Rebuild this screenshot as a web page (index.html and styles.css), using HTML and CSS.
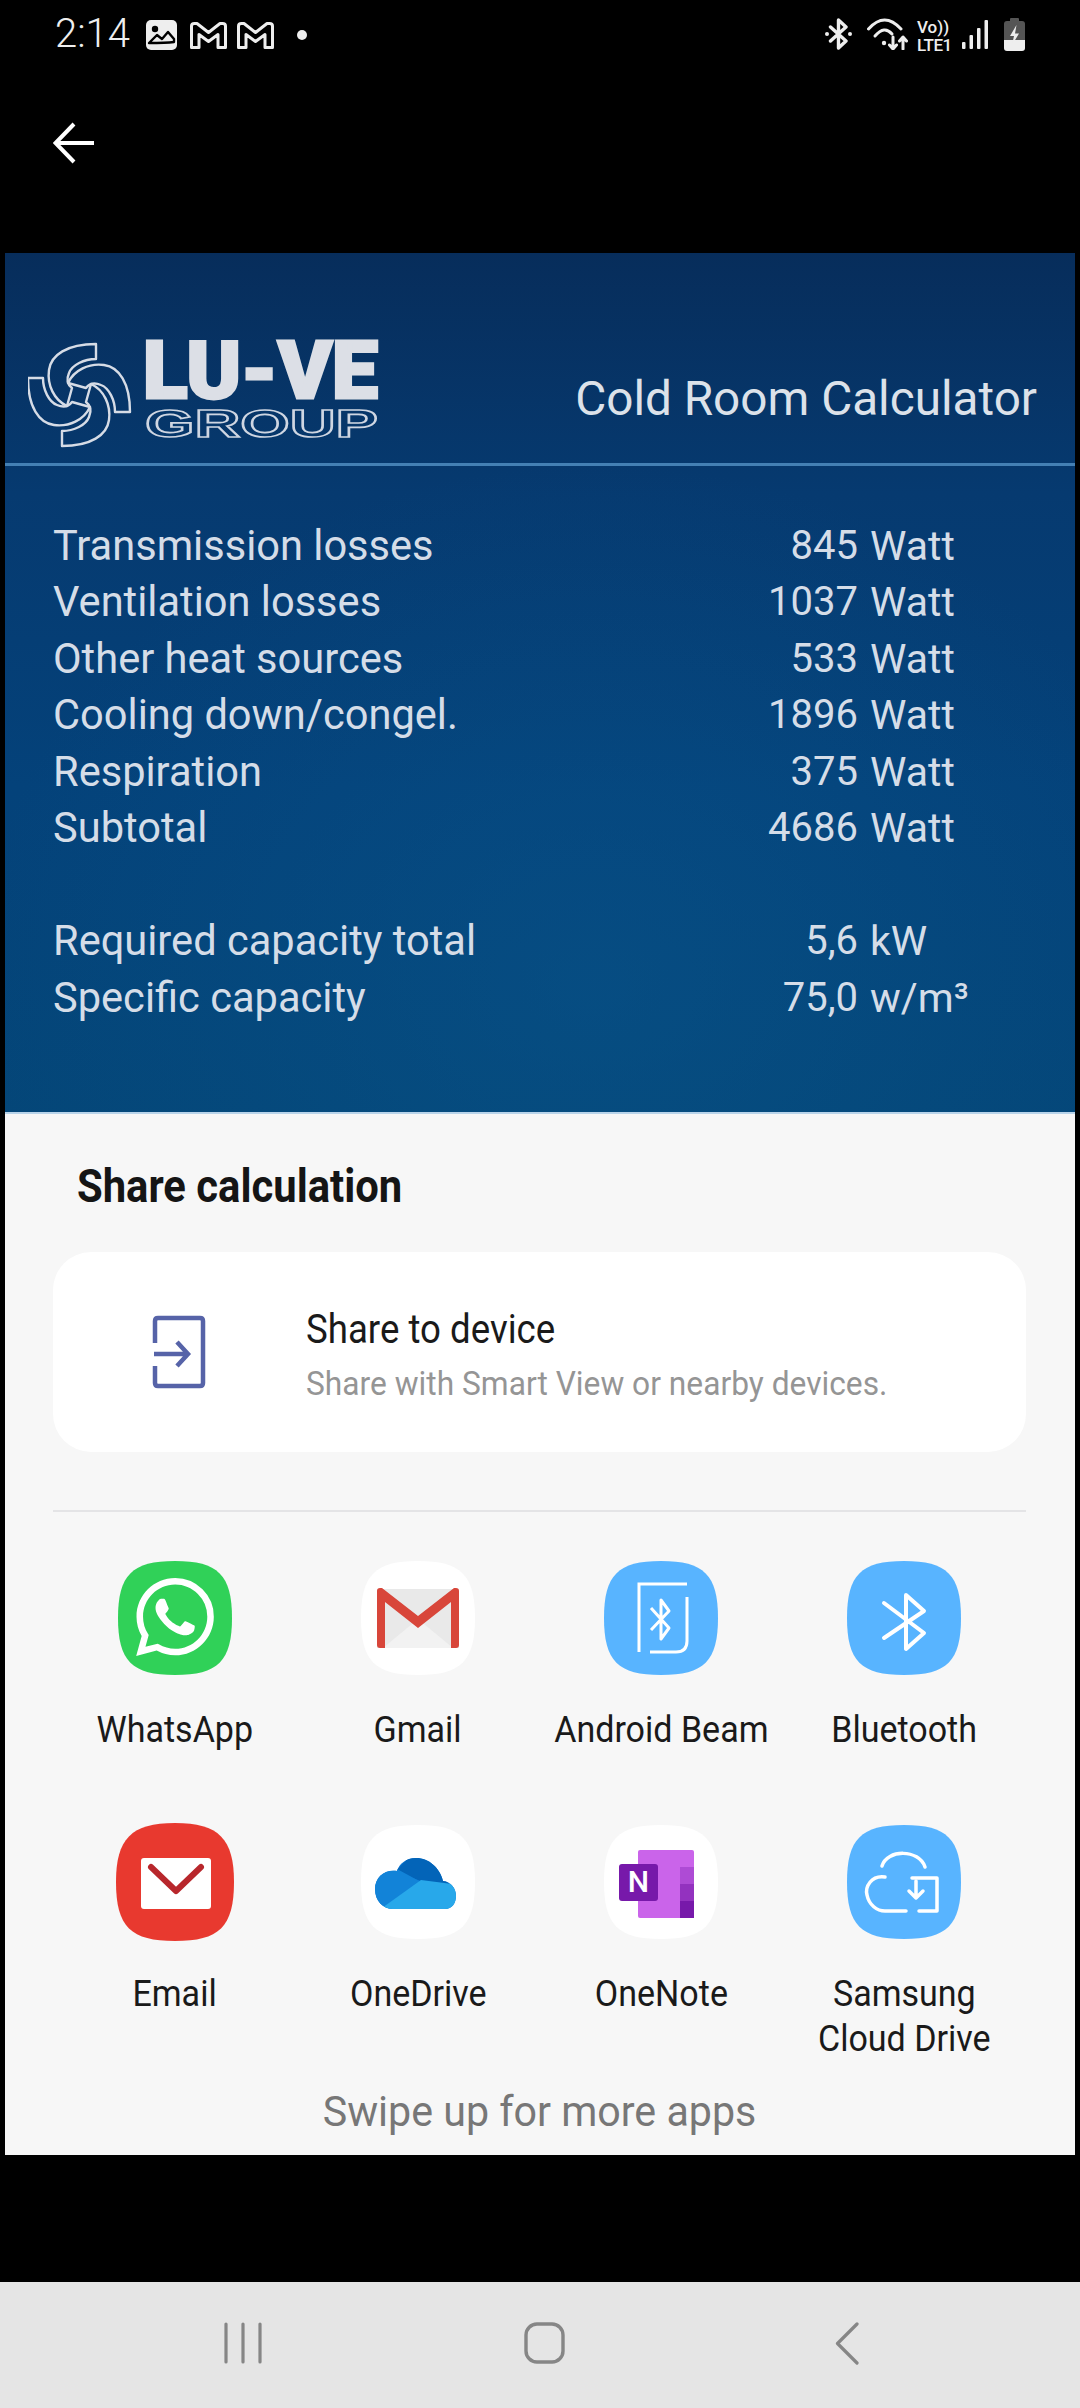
FILE: index.html
```html
<!DOCTYPE html>
<html lang="en">
<head>
<meta charset="utf-8">
<title>Cold Room Calculator</title>
<link rel="stylesheet" href="styles.css">
</head>
<body>
<div class="screen">
  <header class="statusbar">
    <div class="status-left">
      <span class="time">2:14</span>
      <svg class="ic-pic" width="31" height="30" viewBox="0 0 31 30"><rect width="31" height="30" rx="5" fill="#eee"/><circle cx="9" cy="9" r="3.2" fill="#000"/><path d="M3 23 L11 15 L16 19 L22 12 L28 19 V22 Q20 23 3 23Z" fill="none" stroke="#000" stroke-width="2.4" stroke-linejoin="round"/></svg>
      <svg class="ic-m1" width="37" height="27" viewBox="0 0 37 27"><path d="M1.5 4 Q1.5 1.5 4.5 1.5 H7 L18.5 10.5 L30 1.5 H32.5 Q35.5 1.5 35.5 4 V25.5 H28 V12.5 L18.5 19.5 L9 12.5 V25.5 H1.5Z" fill="none" stroke="#eee" stroke-width="3" stroke-linejoin="round"/></svg>
      <svg class="ic-m2" width="37" height="27" viewBox="0 0 37 27"><path d="M1.5 4 Q1.5 1.5 4.5 1.5 H7 L18.5 10.5 L30 1.5 H32.5 Q35.5 1.5 35.5 4 V25.5 H28 V12.5 L18.5 19.5 L9 12.5 V25.5 H1.5Z" fill="none" stroke="#eee" stroke-width="3" stroke-linejoin="round"/></svg>
      <span class="dot"></span>
    </div>
    <div class="status-right">
      <svg width="27" height="32" viewBox="0 0 27 32"><path d="M5.5 9 L21 23 L13.5 30 V2 L21 9 L5.5 23" fill="none" stroke="#eee" stroke-width="3.4" stroke-linejoin="round" stroke-linecap="round"/><circle cx="2" cy="16" r="2" fill="#eee"/><circle cx="25" cy="16" r="2" fill="#eee"/></svg>
      <svg class="ic-wifi" width="41" height="32" viewBox="0 0 41 32"><g fill="none" stroke="#eee" stroke-width="3" stroke-linecap="round" stroke-linejoin="round"><path d="M1.5 11 Q17.5 -7 34 11"/><path d="M8 18 Q17.5 7 25 16"/><path d="M26 19 V31 M22.500 27 L26 31 L29.500 27"/><path d="M36 31 V19.500 M32.500 23 L36 19 L39.500 23"/></g><circle cx="17" cy="25" r="2.200" fill="#eee"/></svg>
      <div class="volte"><span class="vo">Vo))</span><span class="lte">LTE1</span></div>
      <svg class="ic-signal" width="26" height="29" viewBox="0 0 26 29"><g fill="#eee"><rect x="0" y="22" width="3.500" height="7" rx="1"/><rect x="7.500" y="15" width="3.500" height="14" rx="1"/><rect x="15" y="8" width="3.500" height="21" rx="1"/><rect x="22.500" y="0" width="3.500" height="29" rx="1"/></g></svg>
      <svg class="ic-batt" width="21" height="33" viewBox="0 0 21 33"><path d="M6 3 V1 Q6 0 7 0 H14 Q15 0 15 1 V3Z" fill="#555"/><path d="M0 22 V6 Q0 3 3 3 H18 Q21 3 21 6 V22Z" fill="#555"/><path d="M0 22 H21 V30 Q21 33 18 33 H3 Q0 33 0 30Z" fill="#eee"/><path d="M12.500 7 L6 18 H10 L8 27 L15 15.500 H11Z" fill="#eee"/></svg>
    </div>
  </header>

  <div class="appbar">
    <svg width="42" height="42" viewBox="0 0 42 42"><path d="M41 21 H3 M21 2 L2.500 21 L21 40" fill="none" stroke="#fff" stroke-width="4"/></svg>
  </div>

  <main class="panel">
    <section class="report">
      <div class="report-head">
        <svg class="logo" width="352" height="128" viewBox="0 -20 352 128">
          <g transform="translate(51 53)" fill="none" stroke="#d6dce6" stroke-width="2.400" stroke-linejoin="round">
            <path d="M-11 -12 C-5 -25 10 -32 25 -30 C40 -28 51 -12 51 17 H36 C36 5 30 -7 22 -10 C15 -13 10 -11 7 -7Z"/>
            <path transform="rotate(90)" d="M-11 -12 C-5 -25 10 -32 25 -30 C40 -28 51 -12 51 17 H36 C36 5 30 -7 22 -10 C15 -13 10 -11 7 -7Z"/>
            <path transform="rotate(180)" d="M-11 -12 C-5 -25 10 -32 25 -30 C40 -28 51 -12 51 17 H36 C36 5 30 -7 22 -10 C15 -13 10 -11 7 -7Z"/>
            <path transform="rotate(270)" d="M-11 -12 C-5 -25 10 -32 25 -30 C40 -28 51 -12 51 17 H36 C36 5 30 -7 22 -10 C15 -13 10 -11 7 -7Z"/>
          </g>
          <text class="logo-main" x="115" y="56" textLength="235" lengthAdjust="spacingAndGlyphs">LU-VE</text>
          <text class="logo-sub" x="117" y="95" textLength="233" lengthAdjust="spacingAndGlyphs">GROUP</text>
        </svg>
        <h1 class="report-title">Cold Room Calculator</h1>
      </div>
      <div class="stats">
        <span>Transmission losses</span><span class="num">845</span><span class="unit">Watt</span>
        <span>Ventilation losses</span><span class="num">1037</span><span class="unit">Watt</span>
        <span>Other heat sources</span><span class="num">533</span><span class="unit">Watt</span>
        <span>Cooling down/congel.</span><span class="num">1896</span><span class="unit">Watt</span>
        <span>Respiration</span><span class="num">375</span><span class="unit">Watt</span>
        <span>Subtotal</span><span class="num">4686</span><span class="unit">Watt</span>
        <span class="spacer"></span>
        <span>Required capacity total</span><span class="num">5,6</span><span class="unit">kW</span>
        <span>Specific capacity</span><span class="num">75,0</span><span class="unit">w/m³</span>
      </div>
    </section>

    <section class="sheet">
      <h2 class="sheet-title">Share calculation</h2>
      <div class="device-card">
        <svg class="device-icon" width="56" height="74" viewBox="0 0 56 74"><path d="M4 28 V6 Q4 3 7 3 H49 Q52 3 52 6 V68 Q52 71 49 71 H7 Q4 71 4 68 V51" fill="none" stroke="#5663a8" stroke-width="4.500"/><path d="M3 39 H36 M26 27 L37 39 L26 51" fill="none" stroke="#5663a8" stroke-width="4.500"/></svg>
        <div class="device-text">
          <div class="device-name">Share to device</div>
          <div class="device-sub">Share with Smart View or nearby devices.</div>
        </div>
      </div>
      <div class="divider"></div>
      <div class="apps">
        <div class="app">
          <svg class="app-icon" viewBox="0 0 114 114"><path fill="#30d158" d="M57 0 C100 0 114 14 114 57 C114 100 100 114 57 114 C14 114 0 100 0 57 C0 14 14 0 57 0Z"/><g transform="translate(18 17) scale(3.250)"><path fill="#fff" d="M17.472 14.382c-.297-.149-1.758-.867-2.03-.967-.273-.099-.471-.148-.67.15-.197.297-.767.966-.94 1.164-.173.199-.347.223-.644.075-.297-.15-1.255-.463-2.39-1.475-.883-.788-1.48-1.761-1.653-2.059-.173-.297-.018-.458.13-.606.134-.133.298-.347.446-.52.149-.174.198-.298.298-.497.099-.198.05-.371-.025-.52-.075-.149-.669-1.612-.916-2.207-.242-.579-.487-.5-.669-.51-.173-.008-.371-.01-.57-.01-.198 0-.52.074-.792.372-.272.297-1.04 1.016-1.04 2.479 0 1.462 1.065 2.875 1.213 3.074.149.198 2.096 3.2 5.077 4.487.709.306 1.262.489 1.694.625.712.227 1.36.195 1.871.118.571-.085 1.758-.719 2.006-1.413.248-.694.248-1.289.173-1.413-.074-.124-.272-.198-.57-.347m-5.421 7.403h-.004a9.87 9.87 0 01-5.031-1.378l-.361-.214-3.741.982.998-3.648-.235-.374a9.86 9.86 0 01-1.51-5.26c.001-5.45 4.436-9.884 9.888-9.884 2.64 0 5.122 1.03 6.988 2.898a9.825 9.825 0 012.893 6.994c-.003 5.45-4.437 9.884-9.885 9.884m8.413-18.297A11.815 11.815 0 0012.05 0C5.495 0 .16 5.335.157 11.892c0 2.096.547 4.142 1.588 5.945L.057 24l6.305-1.654a11.882 11.882 0 005.683 1.448h.005c6.554 0 11.89-5.335 11.893-11.893a11.821 11.821 0 00-3.48-8.413z"/></g></svg>
          <span class="app-label">WhatsApp</span>
        </div>
        <div class="app">
          <svg class="app-icon" viewBox="0 0 114 114"><path fill="#fff" d="M57 0 C100 0 114 14 114 57 C114 100 100 114 57 114 C14 114 0 100 0 57 C0 14 14 0 57 0Z"/><rect x="16" y="28" width="82" height="59" fill="#e9e9e9"/><path d="M22 87 L57 58 L92 87Z" fill="#f2f2f2"/><path d="M16 30 Q16 27 19 27 L21 27 L57 55 L93 27 L95 27 Q98 27 98 30 V84 Q98 87 95 87 H90 V41 L57 67 L24 41 V87 H19 Q16 87 16 84Z" fill="#d8463a"/></svg>
          <span class="app-label">Gmail</span>
        </div>
        <div class="app">
          <svg class="app-icon" viewBox="0 0 114 114"><path fill="#58b4ff" d="M57 0 C100 0 114 14 114 57 C114 100 100 114 57 114 C14 114 0 100 0 57 C0 14 14 0 57 0Z"/><path d="M83 23 H35 V91 M83 36 V80 Q83 91 72 91 H46" fill="none" stroke="#fff" stroke-width="3"/><path d="M47 47 L65 67 L57 78 V39 L65 50 L47 69" fill="none" stroke="#fff" stroke-width="3" stroke-linejoin="round"/></svg>
          <span class="app-label">Android Beam</span>
        </div>
        <div class="app">
          <svg class="app-icon" viewBox="0 0 114 114"><path fill="#58b4ff" d="M57 0 C100 0 114 14 114 57 C114 100 100 114 57 114 C14 114 0 100 0 57 C0 14 14 0 57 0Z"/><path d="M37 42 L77 72 L59 88 V34 L77 50 L37 77" fill="none" stroke="#fff" stroke-width="4" stroke-linejoin="round" stroke-linecap="round"/></svg>
          <span class="app-label">Bluetooth</span>
        </div>
        <div class="app">
          <svg class="app-icon" viewBox="0 0 114 114"><path fill="#e8392f" d="M57 -2 C101 -2 116 14 116 57 C116 102 101 116 57 116 C13 116 -2 102 -2 57 C-2 14 13 -2 57 -2Z"/><rect x="23" y="33" width="70" height="51" rx="3" fill="#fff"/><path d="M33 42 L58 66 L83 42" fill="none" stroke="#b8272c" stroke-width="6" stroke-linecap="round" stroke-linejoin="round"/></svg>
          <span class="app-label">Email</span>
        </div>
        <div class="app">
          <svg class="app-icon" viewBox="0 0 114 114"><defs><clipPath id="od"><path d="M55 33 C45 33 38 39 36 46 C24 44 14 52 14 64 C14 76 22 84 32 84 H84 C91 84 95 78 95 71 C95 63 90 57 82 56 C79 43 68 33 55 33Z"/></clipPath></defs><path fill="#fff" d="M57 0 C100 0 114 14 114 57 C114 100 100 114 57 114 C14 114 0 100 0 57 C0 14 14 0 57 0Z"/><g clip-path="url(#od)"><rect x="10" y="28" width="90" height="60" fill="#0f78d4"/><path d="M34 47 L52 28 L90 40 L88 60 L60 56Z" fill="#0364b8"/><path d="M8 40 L36 44 L60 57 L22 86 L8 86Z" fill="#1283d8"/><path d="M60 55 L100 60 V88 H14Z" fill="#28a8ea"/></g></svg>
          <span class="app-label">OneDrive</span>
        </div>
        <div class="app">
          <svg class="app-icon" viewBox="0 0 114 114"><path fill="#fff" d="M57 0 C100 0 114 14 114 57 C114 100 100 114 57 114 C14 114 0 100 0 57 C0 14 14 0 57 0Z"/><rect x="34" y="25" width="56" height="68" rx="2" fill="#ca64ea"/><rect x="76" y="42" width="14" height="17" fill="#ae4bd5"/><rect x="76" y="59" width="14" height="17" fill="#9332bf"/><rect x="76" y="76" width="14" height="17" fill="#7719aa"/><rect x="15" y="39" width="39" height="37" rx="3" fill="#7719aa"/><text class="on-n" x="34.500" y="67" text-anchor="middle">N</text></svg>
          <span class="app-label">OneNote</span>
        </div>
        <div class="app">
          <svg class="app-icon" viewBox="0 0 114 114"><path fill="#58b4ff" d="M57 0 C100 0 114 14 114 57 C114 100 100 114 57 114 C14 114 0 100 0 57 C0 14 14 0 57 0Z"/><g fill="none" stroke="#fff" stroke-width="3.500" stroke-linecap="round" stroke-linejoin="round"><path d="M35 41 C40 24 72 24 78 42"/><path d="M38 52 C24 50 18 62 20 70 C22 80 30 86 38 86 H59"/><path d="M65 53 H90 V86 H72"/><path d="M69 56 V73 M62 66 L69 73 L76 66"/></g></svg>
          <span class="app-label">Samsung<br>Cloud Drive</span>
        </div>
      </div>
      <p class="swipe">Swipe up for more apps</p>
    </section>
  </main>

  <nav class="navbar">
    <svg class="nav-recents" width="38" height="42" viewBox="0 0 38 42"><path d="M2 2 V40 M19 2 V40 M36 2 V40" fill="none" stroke="#868686" stroke-width="3.200" stroke-linecap="round"/></svg>
    <svg class="nav-home" width="41" height="42" viewBox="0 0 41 42"><rect x="2" y="2" width="37" height="38" rx="11" fill="none" stroke="#868686" stroke-width="3.400"/></svg>
    <svg class="nav-back" width="24" height="43" viewBox="0 0 24 43"><path d="M22 2 L2.500 21.500 L22 41" fill="none" stroke="#868686" stroke-width="3.200" stroke-linecap="round" stroke-linejoin="round"/></svg>
  </nav>
</div>
</body>
</html>
```
FILE: styles.css
```css
* { box-sizing: border-box; }
html, body { margin: 0; padding: 0; }
body { background: #000; font-family: Roboto, "Noto Sans", sans-serif; }

.screen { width: 1080px; height: 2408px; display: flex; flex-direction: column; background: #000; }

/* status bar */
.statusbar { height: 70px; flex: none; display: flex; justify-content: space-between; padding: 18px 55px 0 55px; color: #eee; }
.status-left, .status-right { display: flex; align-items: flex-start; }
.time { font-size: 40px; line-height: 36px; font-weight: 300; width: 74px; margin-top: -2px; white-space: nowrap; }
.ic-pic { margin-left: 17px; margin-top: 2px; }
.ic-m1 { margin-left: 13px; margin-top: 4px; }
.ic-m2 { margin-left: 10px; margin-top: 4px; }
.dot { width: 10px; height: 10px; margin: 12px 0 0 23px; border-radius: 50%; background: #eee; }
.ic-wifi { margin-left: 15px; }
.volte { margin-left: 9px; width: 34px; display: flex; flex-direction: column; font-weight: 500; }
.vo { font-size: 17px; line-height: 17px; margin-top: 1px; }
.lte { font-size: 17px; line-height: 16px; letter-spacing: -0.5px; margin-top: 1px; white-space: nowrap; }
.ic-signal { margin-left: 11px; margin-top: 2px; }
.ic-batt { margin-left: 16px; }

/* app bar */
.appbar { height: 183px; flex: none; padding: 52px 0 0 53px; }
.appbar svg { display: block; }

/* panel */
.panel { height: 1902px; flex: none; margin: 0 5px; display: flex; flex-direction: column; }
.report {
  height: 859px; flex: none;
  background:
    radial-gradient(ellipse 620px 520px at 55% 85%, rgba(10, 90, 145, .38), rgba(10, 90, 145, 0) 100%),
    linear-gradient(180deg, #072d5b 0%, #063a70 28%, #04427a 62%, #044678 100%);
}
.report-head { height: 213px; padding: 69px 38px 0 23px; display: flex; justify-content: space-between; align-items: flex-start; border-bottom: 3px solid #4480b4; }
.logo { display: block; }
.logo-main { font-family: Roboto, sans-serif; font-weight: 900; font-size: 80px; fill: #dcdfe6; stroke: #dcdfe6; stroke-width: 3px; }
.logo-sub { font-family: "Liberation Sans", sans-serif; font-weight: 700; font-size: 38px; fill: none; stroke: #cfd6e2; stroke-width: 1.6px; }
.report-title { margin: 50px 0 0; font-size: 47.7px; line-height: 54px; font-weight: 400; color: #dce2ea; white-space: nowrap; }

.stats { display: grid; grid-template-columns: 641px 164px auto; grid-auto-rows: 56.5px; padding: 51.5px 0 0 48px; font-size: 41.6px; color: #d5dde8; align-items: center; }
.stats span { white-space: nowrap; line-height: 56px; }
.stats .num { text-align: right; font-size: 40px; }
.stats .unit { padding-left: 12px; font-size: 41px; }
.stats .spacer { grid-column: 1 / -1; }

/* share sheet */
.sheet { flex: 1; background: #f7f7f7; border-top: 2px solid #b9d4ea; padding: 0 49px 0 48px; }
.sheet-title { margin: 42px 0 0 24px; font-size: 46px; line-height: 60px; font-weight: 700; color: #151515; white-space: nowrap; transform: scaleX(.908); transform-origin: left center; }
.device-card { margin-top: 36px; height: 200px; background: #fff; border-radius: 38px; display: flex; align-items: center; padding: 0 0 0 98px; }
.device-icon { flex: none; display: block; }
.device-text { margin: 9px 0 0 99px; }
.device-name { font-size: 40px; line-height: 46px; color: #1a1a1a; white-space: nowrap; transform: scaleX(.916); transform-origin: left center; }
.device-sub { font-size: 34px; line-height: 46px; margin-top: 7px; color: #959595; white-space: nowrap; transform: scaleX(.933); transform-origin: left center; }
.divider { margin-top: 58px; height: 2px; background: #e4e4e6; }
.apps { margin-top: 49px; display: grid; grid-template-columns: repeat(4, 1fr); row-gap: 72px; align-items: start; }
.app { display: flex; flex-direction: column; align-items: center; }
.app-icon { width: 114px; height: 114px; display: block; overflow: visible; }
.app-label { margin-top: 33px; font-size: 36px; line-height: 45px; color: #1a1a1a; text-align: center; white-space: nowrap; transform: scaleX(.945); }
.on-n { font-family: Roboto, sans-serif; font-weight: 500; font-size: 30px; fill: #fff; }
.swipe { margin: 25px 0 0; font-size: 42px; line-height: 50px; text-align: center; color: #777; transform: scaleX(.98); }

/* navigation */
.navbar { margin-top: auto; height: 126px; flex: none; background: #e5e5e5; display: flex; align-items: center; padding: 0 0 4px 224px; }
.navbar svg { display: block; }
.nav-home { margin-left: 262px; }
.nav-back { margin-left: 270px; }
```
